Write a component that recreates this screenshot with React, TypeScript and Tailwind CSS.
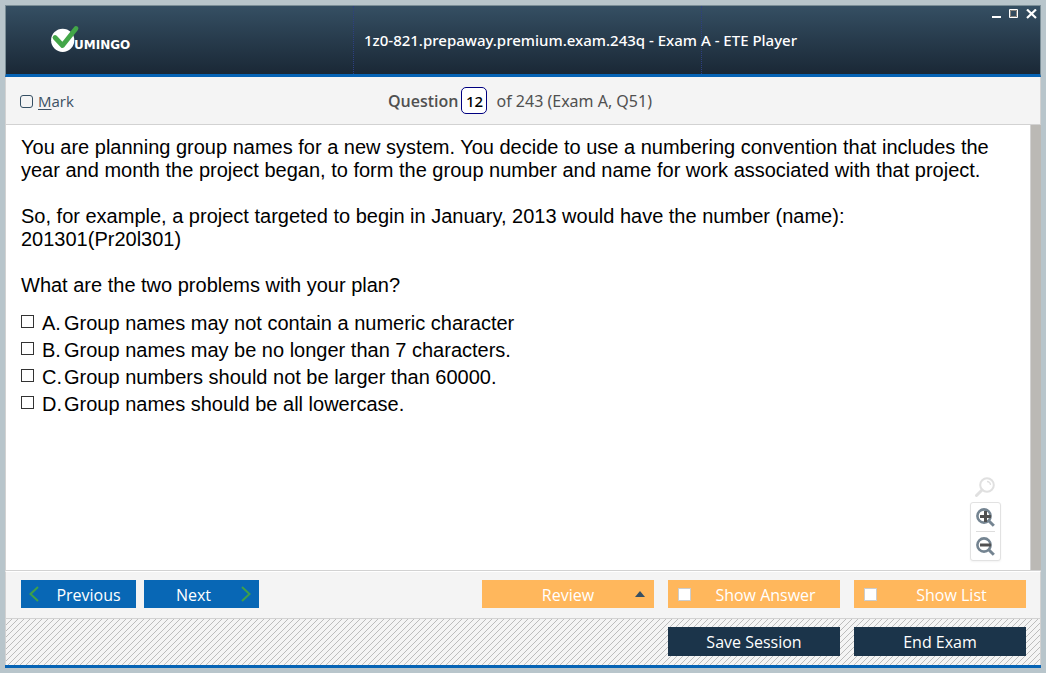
import React from "react";

const UI = "font-['Open_Sans',sans-serif]";

const OPTIONS = [
  { letter: "A.", text: "Group names may not contain a numeric character" },
  { letter: "B.", text: "Group names may be no longer than 7 characters." },
  { letter: "C.", text: "Group numbers should not be larger than 60000." },
  { letter: "D.", text: "Group names should be all lowercase." },
];

function Logo() {
  return (
    <svg width="84" height="28" viewBox="0 0 84 28" role="img" aria-label="Vumingo">
      <circle cx="11.7" cy="15.3" r="11.6" fill="#fff" />
      <path d="M4 12.5 11.5 20.5 25 3.5" fill="none" stroke="#43a648" strokeWidth="4.8" strokeLinecap="round" strokeLinejoin="round" />
      <text x="23" y="24" fill="#fff" fontFamily="DejaVu Sans, sans-serif" fontWeight="700" fontSize="12">UMINGO</text>
    </svg>
  );
}

function Header() {
  return (
    <header className="grid h-[72px] shrink-0 grid-cols-[minmax(0,348fr)_minmax(0,348fr)_minmax(0,338fr)] border-x border-t border-b-3 border-x-[#7b8e97] border-t-[#7b8e97] border-b-[#0563b5] bg-linear-to-b from-[#354f63] to-[#1a2836] text-white">
      <div className="border-r border-dotted border-[#2d3f82] pt-[19px] pl-[45px]">
        <Logo />
      </div>
      <h1 className="flex items-center border-r border-dotted border-[#2d3f82] pl-[10px] font-['Noto_Sans',sans-serif] text-[15px] font-medium whitespace-nowrap">
        1z0-821.prepaway.premium.exam.243q - Exam A - ETE Player
      </h1>
      <div className="flex items-start justify-end gap-2 pt-[3px] pr-[3px]">
        <button aria-label="Minimize"><svg width="9" height="10" viewBox="0 0 9 10"><path d="M0 7h9v2H0z" fill="#fff" /></svg></button>
        <button aria-label="Maximize"><svg width="9" height="10" viewBox="0 0 9 10"><path d="M.5.5h8v8h-8z" fill="none" stroke="#fff" /><path d="M1.5 1.5h6v6h-6z" fill="none" stroke="#8a857e" /></svg></button>
        <button aria-label="Close"><svg width="11" height="10" viewBox="0 0 11 10"><path d="M1 .5 10 9M10 .5 1 9" stroke="#fff" strokeWidth="2.2" /></svg></button>
      </div>
    </header>
  );
}

function Lens({ kind }: { kind: "plus" | "minus" }) {
  return (
    <svg width="19" height="20" viewBox="0 0 19 20">
      <circle cx="8" cy="9" r="6.6" fill="none" stroke="#748491" strokeWidth="2.6" />
      <path d="m12.5 13.5 5.3 5.3" stroke="#748491" strokeWidth="3" />
      <path d={kind === "plus" ? "M4 9.5h11M9.5 4v11" : "M4 9h11"} stroke="#505050" strokeWidth="3" />
    </svg>
  );
}

export default function App() {
  return (
    <div className="flex min-h-screen flex-col bg-[#b8c5cb] p-[5px] text-black">
      <div className={`flex flex-1 flex-col border-b-3 border-[#0563b5] bg-[#f4f4f4] ${UI}`}>
        <Header />
        <div className="grid h-12 shrink-0 grid-cols-[1fr_auto_1fr] items-center border-x border-b border-[#d2d2d2] pl-[14px] text-[16px] text-[#505050]">
          <label className="flex items-center gap-[5px] pt-[2px] text-[15px] text-[#3c5062]">
            <input type="checkbox" className="size-[13px] appearance-none rounded-[3px] border border-[#354f63] bg-[#f4f4f4]" />
            <span><u className="underline-offset-2">M</u>ark</span>
          </label>
          <div className="flex items-center pr-5">
            <label htmlFor="question" className="font-semibold">Question</label>
            <input id="question" defaultValue="12" className="mr-[9px] ml-[3px] h-[27px] w-[26px] rounded-[5px] border border-[#000080] bg-white text-center font-['Noto_Sans',sans-serif] text-[15px] font-medium text-black" />
            <span className="font-['Noto_Sans',sans-serif]">of 243 (Exam A, Q51)</span>
          </div>
        </div>
        <main className="flex flex-1 border-b border-l border-[#d2d2d2] bg-white font-['Liberation_Sans',Arial,sans-serif] text-[20px] leading-[23px]">
          <div className="relative flex-1 pt-[11px] pr-10 pl-[15px]">
            <p>You are planning group names for a new system. You decide to use a numbering convention that includes the year and month the project began, to form the group number and name for work associated with that project.</p>
            <p className="mt-[23px]">So, for example, a project targeted to begin in January, 2013 would have the number (name):<br />201301(Pr20l301)</p>
            <p className="mt-[23px]">What are the two problems with your plan?</p>
            <ul className="mt-[13px]">
              {OPTIONS.map((o) => (
                <li key={o.letter}>
                  <label className="flex h-[27px] items-center">
                    <input type="checkbox" className="mr-2 mb-1 size-[13px] shrink-0 appearance-none border border-[#333] bg-white" />
                    <span className="w-[22px] shrink-0">{o.letter}</span>
                    <span>{o.text}</span>
                  </label>
                </li>
              ))}
            </ul>
            <div className="absolute right-[29px] bottom-[9px] flex flex-col items-center">
              <button aria-label="Search" className="mb-[5px]">
                <svg width="21" height="20" viewBox="0 0 21 20" fill="none" stroke="#e0e0e0">
                  <circle cx="12" cy="8" r="6.8" strokeWidth="2" />
                  <path d="m7 13-5.5 5.5" strokeWidth="3" strokeLinecap="round" />
                  <path d="M12 4.5a3.5 3.5 0 0 1 3.5 3.5" strokeWidth="1.3" />
                </svg>
              </button>
              <div className="flex w-[31px] flex-col items-center rounded-[3px] border border-[#e2e2e2] bg-white shadow-xs">
                <button aria-label="Zoom in" className="flex h-[29px] items-center border-b border-[#ddd]"><Lens kind="plus" /></button>
                <button aria-label="Zoom out" className="flex h-[28px] items-center"><Lens kind="minus" /></button>
              </div>
            </div>
          </div>
          <div className="w-[11px] border-l border-[#d2d2d2] bg-[#bbb9b5]" />
        </main>
        <div className="flex h-12 shrink-0 items-center gap-2 border-x border-t border-b border-[#d2d2d2] border-t-white pr-[14px] pb-[2px] pl-[15px] text-[16px] text-white">
          <button className="relative h-7 w-[115px] bg-[#0867b5] pt-[2px] pl-5">
            <svg className="absolute top-1.5 left-2" width="10" height="16" viewBox="0 0 10 16"><path d="M9 1 1.5 8 9 15" fill="none" stroke="#3fa04a" strokeWidth="2" /></svg>
            Previous
          </button>
          <button className="relative h-7 w-[115px] bg-[#0867b5] pt-[2px] pr-4">
            Next
            <svg className="absolute top-1.5 right-2" width="10" height="16" viewBox="0 0 10 16"><path d="M1 1 8.5 8 1 15" fill="none" stroke="#3fa04a" strokeWidth="2" /></svg>
          </button>
          <div className="ml-auto flex gap-[14px]">
            <button className="relative h-7 w-[172px] bg-[#ffb75c] pt-[2px]">
              Review
              <svg className="absolute top-[11px] right-[9px]" width="10" height="6" viewBox="0 0 10 6"><path d="M5 0 10 6H0z" fill="#354f63" /></svg>
            </button>
            {["Show Answer", "Show List"].map((t) => (
              <label key={t} className="flex h-7 w-[172px] items-center bg-[#ffb75c] pl-[10px]">
                <input type="checkbox" className="size-[13px] appearance-none border border-[#ccc] bg-white" />
                <span className="flex-1 pt-[2px] text-center">{t}</span>
              </label>
            ))}
          </div>
        </div>
        <div className="flex h-[46px] shrink-0 items-center justify-end gap-[14px] border-x border-[#d2d2d2] bg-[linear-gradient(135deg,#f4f4f4_46%,#bcbcbc_46%,#bcbcbc_54%,#f4f4f4_54%)] bg-size-[6px_6px] pr-[14px] pb-[2px] text-[16px] text-white">
          <button className="h-[29px] w-[172px] bg-[#1b344a] pt-[2px]">Save Session</button>
          <button className="h-[29px] w-[172px] bg-[#1b344a] pt-[2px]">End Exam</button>
        </div>
      </div>
    </div>
  );
}
